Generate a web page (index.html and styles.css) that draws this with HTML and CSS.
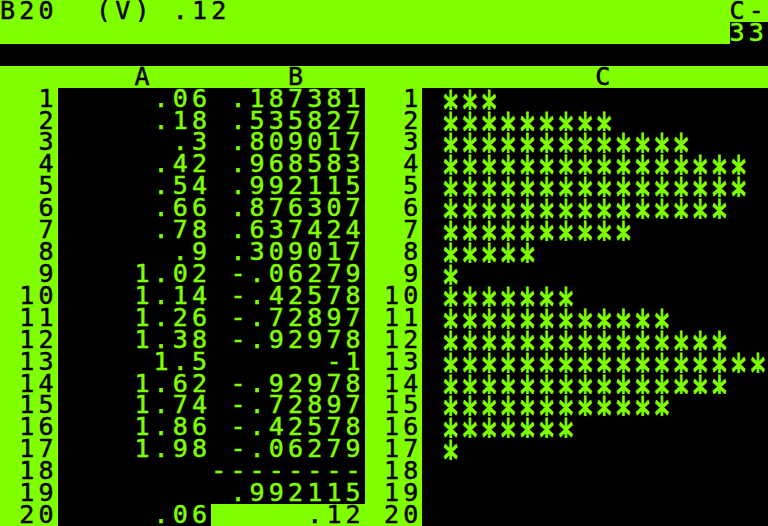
FILE: index.html
```html
<!DOCTYPE html>
<html>
<head>
<meta charset="utf-8">
<link rel="stylesheet" href="styles.css">
</head>
<body>
<div class="screen">
  <div class="line g">B20  (V) .12                          C-</div>
  <div class="line g split"><span>                                      </span><span class="k">33</span></div>
  <div class="line k"></div>
  <div class="line g">       A       B               C        </div>

  <div class="row"><span class="lbl">  1</span><span class="cell">     .06</span><span class="cell"> .187381</span><span class="lbl">  1</span><span class="cell c"> <span class="stars">***</span></span></div>
  <div class="row"><span class="lbl">  2</span><span class="cell">     .18</span><span class="cell"> .535827</span><span class="lbl">  2</span><span class="cell c"> <span class="stars">*********</span></span></div>
  <div class="row"><span class="lbl">  3</span><span class="cell">      .3</span><span class="cell"> .809017</span><span class="lbl">  3</span><span class="cell c"> <span class="stars">*************</span></span></div>
  <div class="row"><span class="lbl">  4</span><span class="cell">     .42</span><span class="cell"> .968583</span><span class="lbl">  4</span><span class="cell c"> <span class="stars">****************</span></span></div>
  <div class="row"><span class="lbl">  5</span><span class="cell">     .54</span><span class="cell"> .992115</span><span class="lbl">  5</span><span class="cell c"> <span class="stars">****************</span></span></div>
  <div class="row"><span class="lbl">  6</span><span class="cell">     .66</span><span class="cell"> .876307</span><span class="lbl">  6</span><span class="cell c"> <span class="stars">***************</span></span></div>
  <div class="row"><span class="lbl">  7</span><span class="cell">     .78</span><span class="cell"> .637424</span><span class="lbl">  7</span><span class="cell c"> <span class="stars">**********</span></span></div>
  <div class="row"><span class="lbl">  8</span><span class="cell">      .9</span><span class="cell"> .309017</span><span class="lbl">  8</span><span class="cell c"> <span class="stars">*****</span></span></div>
  <div class="row"><span class="lbl">  9</span><span class="cell">    1.02</span><span class="cell"> -.06279</span><span class="lbl">  9</span><span class="cell c"> <span class="stars">*</span></span></div>
  <div class="row"><span class="lbl"> 10</span><span class="cell">    1.14</span><span class="cell"> -.42578</span><span class="lbl"> 10</span><span class="cell c"> <span class="stars">*******</span></span></div>
  <div class="row"><span class="lbl"> 11</span><span class="cell">    1.26</span><span class="cell"> -.72897</span><span class="lbl"> 11</span><span class="cell c"> <span class="stars">************</span></span></div>
  <div class="row"><span class="lbl"> 12</span><span class="cell">    1.38</span><span class="cell"> -.92978</span><span class="lbl"> 12</span><span class="cell c"> <span class="stars">***************</span></span></div>
  <div class="row"><span class="lbl"> 13</span><span class="cell">     1.5</span><span class="cell">      -1</span><span class="lbl"> 13</span><span class="cell c"> <span class="stars">*****************</span></span></div>
  <div class="row"><span class="lbl"> 14</span><span class="cell">    1.62</span><span class="cell"> -.92978</span><span class="lbl"> 14</span><span class="cell c"> <span class="stars">***************</span></span></div>
  <div class="row"><span class="lbl"> 15</span><span class="cell">    1.74</span><span class="cell"> -.72897</span><span class="lbl"> 15</span><span class="cell c"> <span class="stars">************</span></span></div>
  <div class="row"><span class="lbl"> 16</span><span class="cell">    1.86</span><span class="cell"> -.42578</span><span class="lbl"> 16</span><span class="cell c"> <span class="stars">*******</span></span></div>
  <div class="row"><span class="lbl"> 17</span><span class="cell">    1.98</span><span class="cell"> -.06279</span><span class="lbl"> 17</span><span class="cell c"> <span class="stars">*</span></span></div>
  <div class="row"><span class="lbl"> 18</span><span class="cell">        </span><span class="cell">--------</span><span class="lbl"> 18</span><span class="cell c"></span></div>
  <div class="row"><span class="lbl"> 19</span><span class="cell">        </span><span class="cell"> .992115</span><span class="lbl"> 19</span><span class="cell c"></span></div>
  <div class="row"><span class="lbl"> 20</span><span class="cell">     .06</span><span class="cell cursor">     .12</span><span class="lbl"> 20</span><span class="cell c"></span></div>
</div>
</body>
</html>
```

FILE: styles.css
```css
html, body {
  margin: 0;
  padding: 0;
  background: #000;
}

body {
  width: 768px;
  height: 526px;
  overflow: hidden;
}

.screen {
  width: 768px;
  height: 526px;
  display: grid;
  grid-template-rows: repeat(24, 1fr);
  font-family: "DejaVu Sans Mono", monospace;
  font-size: 25px;
  letter-spacing: 4.1487px;
  line-height: 21.9167px;
  white-space: pre;
  color: #000;
  -webkit-text-stroke: 0.5px currentColor;
  overflow: hidden;
}

.line {
  overflow: hidden;
}

.g {
  background: #80ff00;
  color: #000;
}

.k {
  background: #000;
  color: #80ff00;
}

.split {
  display: flex;
}

.row {
  display: grid;
  grid-template-columns: 57.6px 153.6px 153.6px 57.6px 345.6px;
  overflow: hidden;
}

.lbl {
  background: #80ff00;
  color: #000;
}

.cell {
  background: #000;
  color: #80ff00;
  overflow: hidden;
}

.cursor {
  background: #80ff00;
  color: #000;
}

.stars {
  display: inline-block;
  letter-spacing: 1.645px;
  transform: scale(1.15, 2.0);
  transform-origin: 0 -0.5px;
  -webkit-text-stroke: 0.7px currentColor;
}
```
